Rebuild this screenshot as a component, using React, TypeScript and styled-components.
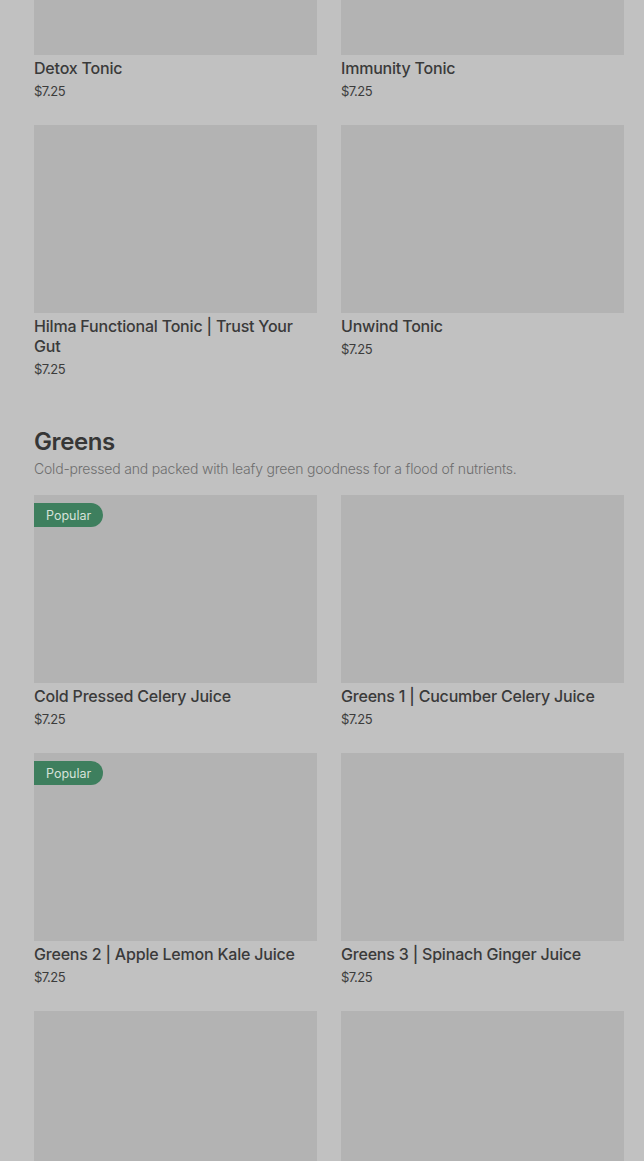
import React from "react";
import styled, { createGlobalStyle } from "styled-components";

const GlobalStyle = createGlobalStyle`
  html, body {
    margin: 0;
    padding: 0;
    background: #c1c1c1;
    font-family: Inter, Roboto, "Liberation Sans", Arial, sans-serif;
    overflow: hidden;
  }
  * { box-sizing: border-box; }
`;

const Page = styled.main`
  display: flex;
  flex-direction: column;
  gap: 49px;
  padding: 0 20px 0 34px;
  margin-top: -133px;
  width: 644px;
`;

const Section = styled.section`
  display: flex;
  flex-direction: column;
`;

const Heading = styled.h2`
  margin: 0;
  font-size: 24px;
  line-height: 30px;
  font-weight: 600;
  color: #363636;
  letter-spacing: -0.4px;
`;

const Description = styled.p`
  margin: 2px 0 16px;
  font-size: 14px;
  line-height: 20px;
  font-weight: 300;
  color: #6e6e6e;
  letter-spacing: -0.2px;
`;

const Grid = styled.div`
  display: grid;
  grid-template-columns: 283px 283px;
  column-gap: 24px;
  row-gap: 25px;
`;

const Card = styled.article`
  display: flex;
  flex-direction: column;
`;

const Thumb = styled.div`
  position: relative;
  height: 188px;
  background: #b3b3b3;
`;

const Badge = styled.span`
  position: absolute;
  top: 8px;
  left: 0;
  height: 24px;
  padding: 0 12px;
  display: inline-flex;
  align-items: center;
  background: #3e7f5e;
  color: #d6e2da;
  font-size: 12.5px;
  font-weight: 400;
  border-radius: 0 12px 12px 0;
`;

const Title = styled.h3`
  margin: 3px 0 0;
  font-size: 16px;
  line-height: 20px;
  font-weight: 500;
  color: #3a3a3a;
  letter-spacing: -0.2px;
`;

const Price = styled.span`
  margin-top: 4px;
  font-size: 13px;
  line-height: 18px;
  color: #3c3c3c;
  letter-spacing: -0.5px;
`;

type Item = { name: string; price: string; popular?: boolean };

const tonics: Item[] = [
  { name: "Detox Tonic", price: "$7.25" },
  { name: "Immunity Tonic", price: "$7.25" },
  { name: "Hilma Functional Tonic | Trust Your Gut", price: "$7.25" },
  { name: "Unwind Tonic", price: "$7.25" },
];

const greens: Item[] = [
  { name: "Cold Pressed Celery Juice", price: "$7.25", popular: true },
  { name: "Greens 1 | Cucumber Celery Juice", price: "$7.25" },
  { name: "Greens 2 | Apple Lemon Kale Juice", price: "$7.25", popular: true },
  { name: "Greens 3 | Spinach Ginger Juice", price: "$7.25" },
  { name: "Greens 4 | Kale Pineapple Juice", price: "$7.25" },
  { name: "Greens 5 | Romaine Mint Juice", price: "$7.25" },
];

const ProductCard = ({ item }: { item: Item }) => (
  <Card>
    <Thumb>{item.popular && <Badge>Popular</Badge>}</Thumb>
    <Title>{item.name}</Title>
    <Price>{item.price}</Price>
  </Card>
);

export default function App() {
  return (
    <>
      <GlobalStyle />
      <Page>
        <Section>
          <Grid>
            {tonics.map((t) => (
              <ProductCard key={t.name} item={t} />
            ))}
          </Grid>
        </Section>
        <Section>
          <Heading>Greens</Heading>
          <Description>
            Cold-pressed and packed with leafy green goodness for a flood of nutrients.
          </Description>
          <Grid>
            {greens.map((g) => (
              <ProductCard key={g.name} item={g} />
            ))}
          </Grid>
        </Section>
      </Page>
    </>
  );
}
